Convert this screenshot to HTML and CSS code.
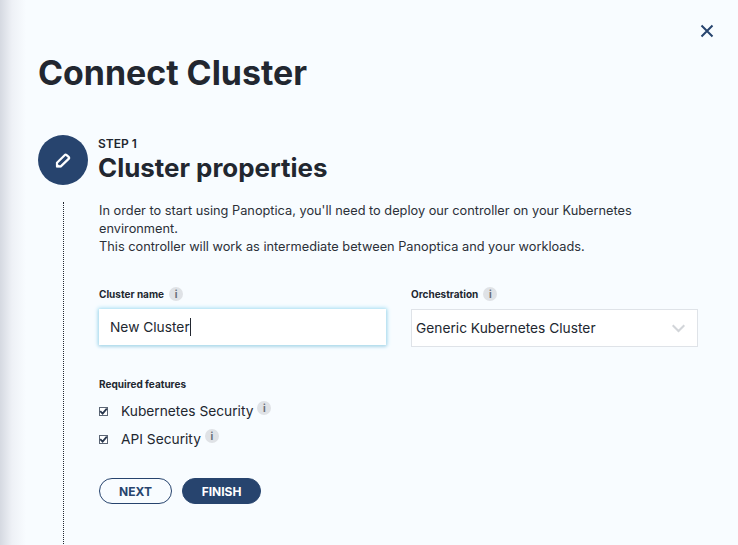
FILE: index.html
```html
<!DOCTYPE html>
<html lang="en">
<head>
    <meta charset="UTF-8">
    <meta name="viewport" content="width=device-width, initial-scale=1.0">
    <title>Connect Cluster</title>
    <link rel="stylesheet" href="styles.css">
</head>
<body>

    <div class="panel">
        <div class="close-row">
            <button type="button" class="close-button" aria-label="Close">
                <svg width="14" height="14" viewBox="0 0 14 14"><path d="M1.5 1.5L12.5 12.5M12.5 1.5L1.5 12.5" stroke="#27446e" stroke-width="2" fill="none"/></svg>
            </button>
        </div>

        <h1>Connect Cluster</h1>

        <div class="step-header">
            <div class="step-icon">
                <svg width="16" height="16" viewBox="0 0 16 16"><path d="M2 10.8L9.6 3.2C10.2 2.6 11 2.6 11.6 3.1L13.6 4.9C14.2 5.5 14.2 6.3 13.6 6.9L5.8 14.4H2Z" fill="none" stroke="#fff" stroke-width="2.2" stroke-linejoin="round"/><path d="M1 10.6L6 15.2H1Z" fill="#fff"/></svg>
            </div>
            <div class="step-titles">
                <div class="step-number">STEP 1</div>
                <h2>Cluster properties</h2>
            </div>
        </div>

        <div class="step-body">
            <p class="intro">In order to start using Panoptica, you'll need to deploy our controller on your Kubernetes environment.<br>This controller will work as intermediate between Panoptica and your workloads.</p>

            <div class="field-row">
                <div class="field">
                    <div class="field-label">Cluster name <span class="info">i</span></div>
                    <div class="text-input"><span>New Cluster</span><span class="caret"></span></div>
                </div>
                <div class="field">
                    <div class="field-label">Orchestration <span class="info">i</span></div>
                    <div class="select-input">
                        <span>Generic Kubernetes Cluster</span>
                        <svg width="13" height="9" viewBox="0 0 13 9"><path d="M0.7 1.2L6.5 7L12.3 1.2" stroke="#d2d5d9" stroke-width="2" fill="none"/></svg>
                    </div>
                </div>
            </div>

            <div class="field-label features-label">Required features</div>
            <div class="check-row">
                <span class="check"><svg width="9" height="9" viewBox="0 0 9 9"><path d="M1.2 4.2L3.6 6.6L7.8 1.6" stroke="#27364d" stroke-width="1.8" fill="none"/></svg></span>
                <span class="check-text">Kubernetes Security</span>
                <span class="info raised">i</span>
            </div>
            <div class="check-row">
                <span class="check"><svg width="9" height="9" viewBox="0 0 9 9"><path d="M1.2 4.2L3.6 6.6L7.8 1.6" stroke="#27364d" stroke-width="1.8" fill="none"/></svg></span>
                <span class="check-text">API Security</span>
                <span class="info raised">i</span>
            </div>

            <div class="buttons">
                <button type="button" class="btn btn-outline">NEXT</button>
                <button type="button" class="btn btn-solid">FINISH</button>
            </div>
        </div>
    </div>

</body>
</html>
```

FILE: styles.css
```css
html, body {
    height: 100%;
}

body {
    margin: 0;
    overflow: hidden;
    font-family: 'Inter', sans-serif;
    color: #222730;
    background-color: #f8fcff;
}

.panel {
    height: 100%;
    box-sizing: border-box;
    padding: 0 40px 0 38px;
    background: linear-gradient(to right, #d5d9e1 0, #eef1f6 12px, #f8fcff 26px);
}

.close-row {
    display: flex;
    justify-content: flex-end;
    padding-top: 24px;
}

.close-button {
    display: flex;
    padding: 0;
    margin-right: -16px;
    border: none;
    background: none;
}

h1 {
    margin: 14px 0 0;
    font-size: 33.9px;
    line-height: 42px;
    font-weight: 700;
}

.step-header {
    display: flex;
    align-items: flex-start;
    gap: 10px;
    margin-top: 41px;
}

.step-icon {
    display: flex;
    align-items: center;
    justify-content: center;
    width: 50px;
    height: 50px;
    border-radius: 50%;
    background-color: #27446e;
}

.step-titles {
    padding-top: 2px;
}

.step-number {
    font-size: 12px;
    line-height: 14px;
    font-weight: 600;
}

h2 {
    margin: 1px 0 0;
    font-size: 25.9px;
    line-height: 32px;
    font-weight: 700;
}

.step-body {
    margin: 17px 0 0 25px;
    padding: 0 0 60px 35px;
    border-left: 1px dotted #222730;
}

.intro {
    margin: 0;
    font-size: 12.77px;
    line-height: 17.8px;
    color: #2b3038;
}

.field-row {
    display: grid;
    grid-template-columns: 287px 287px;
    gap: 25px;
    margin-top: 31px;
}

.field-label {
    display: flex;
    align-items: center;
    gap: 5px;
    height: 16px;
    font-size: 10px;
    font-weight: 700;
}

.info {
    display: inline-flex;
    align-items: center;
    justify-content: center;
    width: 14px;
    height: 14px;
    border-radius: 50%;
    background-color: #dfe2e6;
    color: #666d76;
    font-size: 10px;
    font-weight: 700;
}

.text-input,
.select-input {
    display: flex;
    align-items: center;
    box-sizing: border-box;
    margin-top: 7px;
    height: 38px;
    background-color: #fff;
    font-size: 13.75px;
}

.text-input {
    height: 36px;
    padding-left: 11px;
    box-shadow: 0 0 4px 1px #a8e2f6, 0 1px 3px #b9c4cf;
}

.caret {
    width: 1px;
    height: 18px;
    background-color: #222730;
}

.select-input {
    justify-content: space-between;
    padding: 0 12px 0 4px;
    border: 1px solid #dfe3e8;
}

.features-label {
    margin-top: 29px;
}

.check-row {
    display: flex;
    align-items: center;
    height: 28px;
    font-size: 13.75px;
}

.features-label + .check-row {
    margin-top: 5px;
}

.check {
    display: flex;
    align-items: center;
    justify-content: center;
    box-sizing: border-box;
    width: 9px;
    height: 9px;
    margin-right: 13px;
    border: 1px solid #5c6675;
    background-color: #fff;
}

.check svg {
    flex: none;
}

.check-text {
    margin-right: 4px;
}

.raised {
    align-self: flex-start;
    margin-top: 4px;
}

.buttons {
    display: flex;
    gap: 10px;
    margin-top: 25px;
}

.btn {
    height: 26px;
    padding: 0;
    border-radius: 13px;
    border: 1px solid #27446e;
    font-family: inherit;
    font-size: 12px;
    font-weight: 700;
    color: #27446e;
    background: none;
}

.btn-outline {
    width: 73px;
}

.btn-solid {
    width: 79px;
    color: #fff;
    background-color: #27446e;
}
```
